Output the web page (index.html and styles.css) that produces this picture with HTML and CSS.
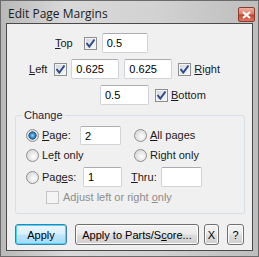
FILE: index.html
```html
<!DOCTYPE html>
<html lang="en">
<head>
    <meta charset="UTF-8">
    <title>Edit Page Margins</title>
    <link rel="stylesheet" href="styles.css">
</head>
<body>
    <div class="window">
        <!-- Title bar -->
        <div class="titlebar">
            <span class="title">Edit Page Margins</span>
            <span class="close-btn">
                <svg width="9" height="8" viewBox="0 0 9 8">
                    <path d="M1 1 L8 7 M8 1 L1 7" stroke="#fff" stroke-width="2.2"/>
                </svg>
            </span>
        </div>

        <div class="client">
            <!-- Margin rows -->
            <div class="row row-top">
                <span class="label"><u>T</u>op</span>
                <span class="check checked cb-top"></span>
                <input class="field f-top" type="text" value="0.5">
            </div>
            <div class="row row-left">
                <span class="label"><u>L</u>eft</span>
                <span class="check checked cb-left"></span>
                <input class="field f-left" type="text" value="0.625">
                <input class="field f-right" type="text" value="0.625">
                <span class="check checked cb-right"></span>
                <span class="label"><u>R</u>ight</span>
            </div>
            <div class="row row-bottom">
                <input class="field f-bottom" type="text" value="0.5">
                <span class="check checked cb-bottom"></span>
                <span class="label"><u>B</u>ottom</span>
            </div>

            <!-- Change group -->
            <div class="group">
                <span class="legend">Change</span>
                <div class="grow grow-1">
                    <span class="opt opt-left">
                        <span class="radio selected"></span>
                        <span class="label"><u>P</u>age:</span>
                    </span>
                    <input class="field f-page" type="text" value="2">
                    <span class="opt">
                        <span class="radio"></span>
                        <span class="label"><u>A</u>ll pages</span>
                    </span>
                </div>
                <div class="grow grow-2">
                    <span class="opt opt-left opt-wide">
                        <span class="radio"></span>
                        <span class="label">Le<u>f</u>t only</span>
                    </span>
                    <span class="opt">
                        <span class="radio"></span>
                        <span class="label">Ri<u>g</u>ht only</span>
                    </span>
                </div>
                <div class="grow grow-3">
                    <span class="opt opt-left">
                        <span class="radio"></span>
                        <span class="label">Pag<u>e</u>s:</span>
                    </span>
                    <input class="field f-from" type="text" value="1">
                    <span class="label thru"><u>T</u>hru:</span>
                    <input class="field f-thru" type="text" value="">
                </div>
                <div class="grow grow-4">
                    <span class="check disabled"></span>
                    <span class="label muted">Adjust left or right <u>o</u>nly</span>
                </div>
            </div>

            <!-- Buttons -->
            <div class="buttons">
                <span class="btn btn-default b-apply">Apply</span>
                <span class="btn b-parts">Apply to Parts/S<u>c</u>ore...</span>
                <span class="btn b-x">X</span>
                <span class="btn b-help">?</span>
            </div>
        </div>
    </div>
</body>
</html>
```
FILE: styles.css
```css
/* Page */
body {
    margin: 0;
    padding: 0;
    background: #ffffff;
    font-family: 'Liberation Sans', Arial, sans-serif;
    font-size: 11px;
    color: #1a1a1a;
}

u {
    text-decoration: underline;
    text-underline-offset: 1px;
}

/* Window frame */
.window {
    width: 259px;
    height: 257px;
    box-sizing: border-box;
    border: 1px solid #6b6b6b;
    background: linear-gradient(to right, #b9b9b9 0%, #d9d9d9 25%, #d2d2d2 60%, #bdbdbd 100%);
    padding: 0 5px 5px 5px;
    display: flex;
    flex-direction: column;
}

.titlebar {
    height: 22px;
    display: flex;
    align-items: center;
    justify-content: space-between;
}

.title {
    font-family: 'Open Sans', 'Liberation Sans', sans-serif;
    font-size: 12px;
    color: #1c1c1c;
    margin-left: 2px;
    margin-top: 3px;
}

.close-btn {
    width: 15px;
    height: 13px;
    margin-top: 5px;
    margin-right: -2px;
    border: 1px solid #8c3a2e;
    border-radius: 2px;
    background: linear-gradient(#f0b0a0 0%, #de7c68 45%, #c9442c 55%, #dd7a63 100%);
    display: flex;
    align-items: center;
    justify-content: center;
}

/* Client area */
.client {
    flex: 1;
    border: 1px solid #4a4a4a;
    background: #f0f0f0;
    display: flex;
    flex-direction: column;
}

.row {
    display: flex;
    align-items: center;
    height: 20px;
}

.label {
    white-space: nowrap;
    line-height: 13px;
}

.muted {
    color: #8d8d8d;
}

/* Text fields */
.field {
    box-sizing: border-box;
    height: 20px;
    border: 1px solid #d0d3d7;
    border-top-color: #abadb3;
    border-radius: 2px;
    background: #ffffff;
    font-family: 'Liberation Sans', Arial, sans-serif;
    font-size: 11px;
    color: #000;
    padding: 0 0 0 4px;
    margin: 0;
    outline: none;
}

/* Checkboxes */
.check {
    box-sizing: border-box;
    width: 13px;
    height: 13px;
    border: 1px solid #8e8f8f;
    background: linear-gradient(135deg, #dcdcdc, #fdfdfd);
    box-shadow: inset 0 0 0 1px #f4f4f4;
    flex: none;
}

.check.checked {
    background-image: url("data:image/svg+xml;utf8,<svg xmlns='http://www.w3.org/2000/svg' width='11' height='11'><path d='M1.5 5 L4.3 8.5 L9.5 1.5' fill='none' stroke='%232f4a8c' stroke-width='2'/></svg>"), linear-gradient(135deg, #d0d4dc, #fbfbfb);
    background-repeat: no-repeat;
}

.check.disabled {
    border-color: #c5c5c5;
    background: #f4f4f4;
    box-shadow: none;
}

/* Radio buttons */
.radio {
    box-sizing: border-box;
    width: 13px;
    height: 13px;
    border-radius: 50%;
    border: 1px solid #8e8f8f;
    background: radial-gradient(circle at 60% 60%, #ffffff 0%, #e8e8e8 45%, #cfcfcf 100%);
    flex: none;
}

.radio.selected {
    background: radial-gradient(circle, #8fd8ff 0%, #2a7fbd 35%, #1a4d7a 50%, #e6e6e6 55%, #d0d0d0 100%);
}

/* Margin rows */
.row-top {
    margin-top: 9px;
    padding-left: 48px;
}

.cb-top {
    margin-left: 11px;
}

.f-top {
    width: 46px;
    margin-left: 5px;
}

.row-left {
    margin-top: 6px;
    padding-left: 22px;
}

.cb-left {
    margin-left: 7px;
}

.f-left {
    width: 48px;
    margin-left: 4px;
}

.f-right {
    width: 48px;
    margin-left: 5px;
}

.cb-right {
    margin-left: 6px;
    margin-right: 3px;
}

.row-bottom {
    margin-top: 6px;
    padding-left: 93px;
}

.f-bottom {
    width: 49px;
}

.cb-bottom {
    margin-left: 6px;
    margin-right: 3px;
}

/* Change group box */
.group {
    position: relative;
    margin: 10px 7px 0 8px;
    height: 99px;
    box-sizing: border-box;
    border: 1px solid #d5dfe5;
    border-radius: 3px;
    padding: 10px 0 0 10px;
}

.legend {
    position: absolute;
    top: -7px;
    left: 6px;
    padding: 0 2px;
    background: #f0f0f0;
    color: #1e2438;
    line-height: 13px;
}

.grow {
    display: flex;
    align-items: center;
}

.opt {
    display: flex;
    align-items: center;
    gap: 3px;
}

.opt-left {
    width: 54px;
}

.opt-wide {
    width: 108px;
}

.grow-1 {
    height: 19px;
}

.f-page {
    width: 41px;
    height: 19px;
    margin-right: 13px;
}

.grow-2 {
    height: 14px;
    margin-top: 3px;
}

.grow-3 {
    height: 20px;
    margin-top: 5px;
}

.grow-3 .opt-left {
    width: 57px;
}

.f-from {
    width: 39px;
}

.thru {
    margin-left: 9px;
    width: 30px;
}

.f-thru {
    width: 41px;
}

.grow-4 {
    margin-top: 4px;
    padding-left: 20px;
    gap: 4px;
}

/* Buttons */
.buttons {
    display: flex;
    align-items: center;
    margin-top: 10px;
    padding-left: 8px;
}

.btn {
    box-sizing: border-box;
    height: 21px;
    border: 1px solid #707070;
    border-radius: 3px;
    background: linear-gradient(#f2f2f2 0%, #ebebeb 48%, #dddddd 52%, #cfcfcf 100%);
    box-shadow: inset 0 0 0 1px #fcfcfc;
    display: flex;
    align-items: center;
    justify-content: center;
    color: #000;
    white-space: nowrap;
}

.btn-default {
    border-color: #3c7fb1;
    background: linear-gradient(#eaf6fd 0%, #d9f0fc 48%, #bee6fd 52%, #a7d9f5 100%);
    box-shadow: inset 0 0 0 1px #48d7fb;
}

.b-apply {
    width: 52px;
}

.b-parts {
    width: 124px;
    margin-left: 8px;
}

.b-x {
    width: 15px;
    margin-left: 5px;
}

.b-help {
    width: 17px;
    margin-left: 8px;
}
```
